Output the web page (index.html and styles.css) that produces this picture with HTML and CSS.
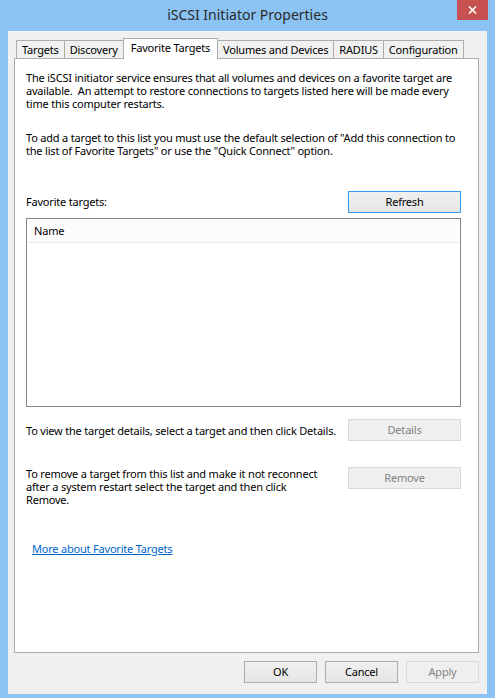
FILE: index.html
```html
<!DOCTYPE html>
<html>
<head>
<meta charset="utf-8">
<link rel="stylesheet" href="styles.css">
</head>
<body>
<div class="window">
  <div class="titlebar">
    <div class="title">iSCSI Initiator Properties</div>
    <div class="close">
      <svg width="9" height="8" viewBox="0 0 9 8"><path d="M1 0.5 L8 7.5 M8 0.5 L1 7.5" stroke="#fff" stroke-width="1.6" fill="none"/></svg>
    </div>
  </div>
  <div class="client">
    <div class="tabs">
      <div class="tab">Targets</div>
      <div class="tab">Discovery</div>
      <div class="tab active">Favorite Targets</div>
      <div class="tab">Volumes and Devices</div>
      <div class="tab">RADIUS</div>
      <div class="tab">Configuration</div>
    </div>
    <div class="panel">
      <p class="para">The iSCSI initiator service ensures that all volumes and devices on a favorite target are<br>available.&nbsp; An attempt to restore connections to targets listed here will be made every<br>time this computer restarts.</p>
      <p class="para para-2">To add a target to this list you must use the default selection of "Add this connection to<br>the list of Favorite Targets" or use the "Quick Connect" option.</p>
      <div class="row row-refresh">
        <span class="label">Favorite targets:</span>
        <button class="btn btn-wide btn-default">Refresh</button>
      </div>
      <div class="listbox">
        <div class="list-header">Name</div>
      </div>
      <div class="row row-details">
        <span class="label">To view the target details, select a target and then click Details.</span>
        <button class="btn btn-wide" disabled>Details</button>
      </div>
      <div class="row row-remove">
        <span class="label">To remove a target from this list and make it not reconnect<br>after a system restart select the target and then click<br>Remove.</span>
        <button class="btn btn-wide" disabled>Remove</button>
      </div>
      <a class="link" href="#">More about Favorite Targets</a>
    </div>
    <div class="actions">
      <button class="btn">OK</button>
      <button class="btn">Cancel</button>
      <button class="btn" disabled>Apply</button>
    </div>
  </div>
</div>
</body>
</html>
```
FILE: styles.css
```css
html, body {
  margin: 0;
  padding: 0;
}
body {
  width: 495px;
  height: 698px;
  background: #8bc3f2;
  font-family: "Noto Sans", "Open Sans", sans-serif;
  font-size: 11px;
  letter-spacing: -0.2px;
  line-height: 13px;
  color: #000;
  overflow: hidden;
}
.window {
  display: flex;
  flex-direction: column;
  height: 698px;
}
.titlebar {
  position: relative;
  height: 31px;
  display: flex;
  justify-content: center;
  align-items: flex-start;
}
.title {
  font-size: 14px;
  letter-spacing: 0;
  line-height: 20px;
  margin-top: 5px;
  color: #2a2a2a;
}
.close {
  position: absolute;
  top: 0;
  right: 7px;
  width: 31px;
  height: 20px;
  background: #c75050;
  display: flex;
  align-items: center;
  justify-content: center;
}
.client {
  flex: 1;
  margin: 0 8px 4px 8px;
  background: #f0f0f0;
  display: flex;
  flex-direction: column;
  padding: 7px 8px 11px 6px;
}
.tabs {
  display: flex;
  align-items: flex-end;
  height: 21px;
  margin: 0 0 -1px 2px;
  position: relative;
  z-index: 1;
}
.tab {
  box-sizing: border-box;
  height: 18px;
  margin-bottom: 1px;
  padding: 0 5px;
  border: 1px solid #acacac;
  border-bottom: none;
  background: #f0f0f0;
  line-height: 17px;
  white-space: nowrap;
}
.tab + .tab {
  margin-left: -1px;
}
.tab.active {
  height: 21px;
  margin-bottom: 0;
  padding: 0 7px;
  background: #fff;
  line-height: 18px;
  position: relative;
  z-index: 2;
}
.panel {
  flex: 1;
  background: #fff;
  border: 1px solid #acacac;
  padding: 12px 17px 0 11px;
  display: flex;
  flex-direction: column;
}
.para {
  margin: 0;
  white-space: nowrap;
}
.para-2 {
  margin-top: 21px;
}
.row {
  display: flex;
  justify-content: space-between;
}
.row-refresh {
  margin-top: 34px;
  align-items: baseline;
}
.row-details {
  margin-top: 12px;
  align-items: center;
}
.row-remove {
  margin-top: 26px;
  align-items: flex-start;
}
.label {
  white-space: nowrap;
}
.btn {
  box-sizing: border-box;
  width: 73px;
  height: 22px;
  border: 1px solid #acacac;
  background: linear-gradient(#f0f0f0, #e5e5e5);
  font-family: inherit;
  font-size: 11px;
  letter-spacing: -0.2px;
  line-height: 18px;
  color: #000;
  padding: 0;
  margin: 0;
}
.btn-wide {
  width: 113px;
}
.btn-default {
  border-color: #3c99f0;
}
.btn:disabled {
  background: #efefef;
  border-color: #d9d9d9;
  color: #838383;
}
.listbox {
  margin-top: 5px;
  height: 189px;
  box-sizing: border-box;
  border: 1px solid #828790;
  padding: 0 1px;
}
.list-header {
  height: 24px;
  box-sizing: border-box;
  background: #fcfcfc;
  border-bottom: 1px solid #e3ecf5;
  padding-left: 6px;
  line-height: 24px;
}
.link {
  margin-top: 36px;
  margin-left: 6px;
  color: #0066cc;
  text-decoration: underline;
  align-self: flex-start;
}
.actions {
  display: flex;
  justify-content: flex-end;
  gap: 8px;
  margin-top: 8px;
}
```
